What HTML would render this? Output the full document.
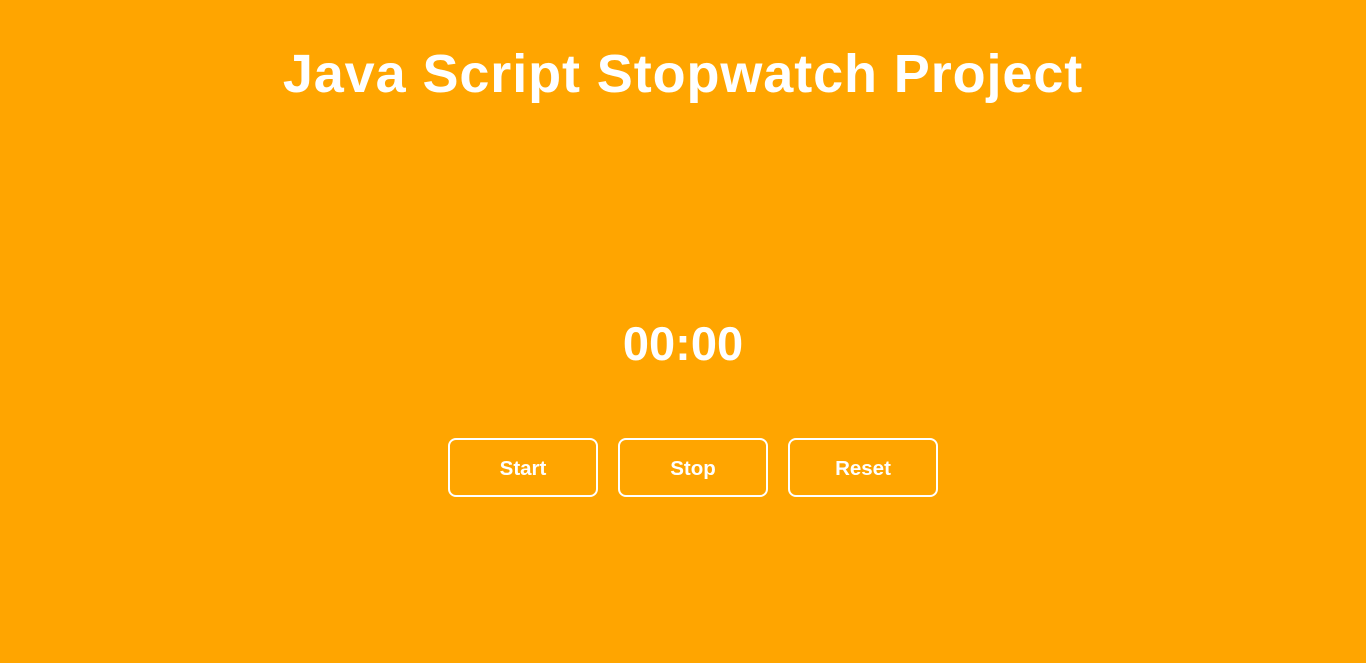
<!DOCTYPE html>
<html><head><style>
html,body{margin:0;padding:0;}
body{width:1366px;height:663px;background:#FFA500;font-family:"Liberation Sans",sans-serif;color:#fff;position:relative;overflow:hidden;}
h1{position:absolute;top:40px;left:0;width:1366px;text-align:center;margin:0;font-size:54px;font-weight:bold;line-height:68px;letter-spacing:0.9px;}
.t{position:absolute;top:318px;left:0;width:1366px;text-align:center;font-size:47px;font-weight:bold;line-height:52px;}
.b{position:absolute;top:438px;border:2px solid #fff;border-radius:8px;box-sizing:content-box;text-align:center;line-height:58px;font-size:20.5px;font-weight:bold;width:146px;height:55px;}
</style></head><body>
<h1>Java Script Stopwatch Project</h1>
<div class="t">00:00</div>
<div class="b" style="left:448px">Start</div>
<div class="b" style="left:618px">Stop</div>
<div class="b" style="left:788px">Reset</div>
</body></html>
